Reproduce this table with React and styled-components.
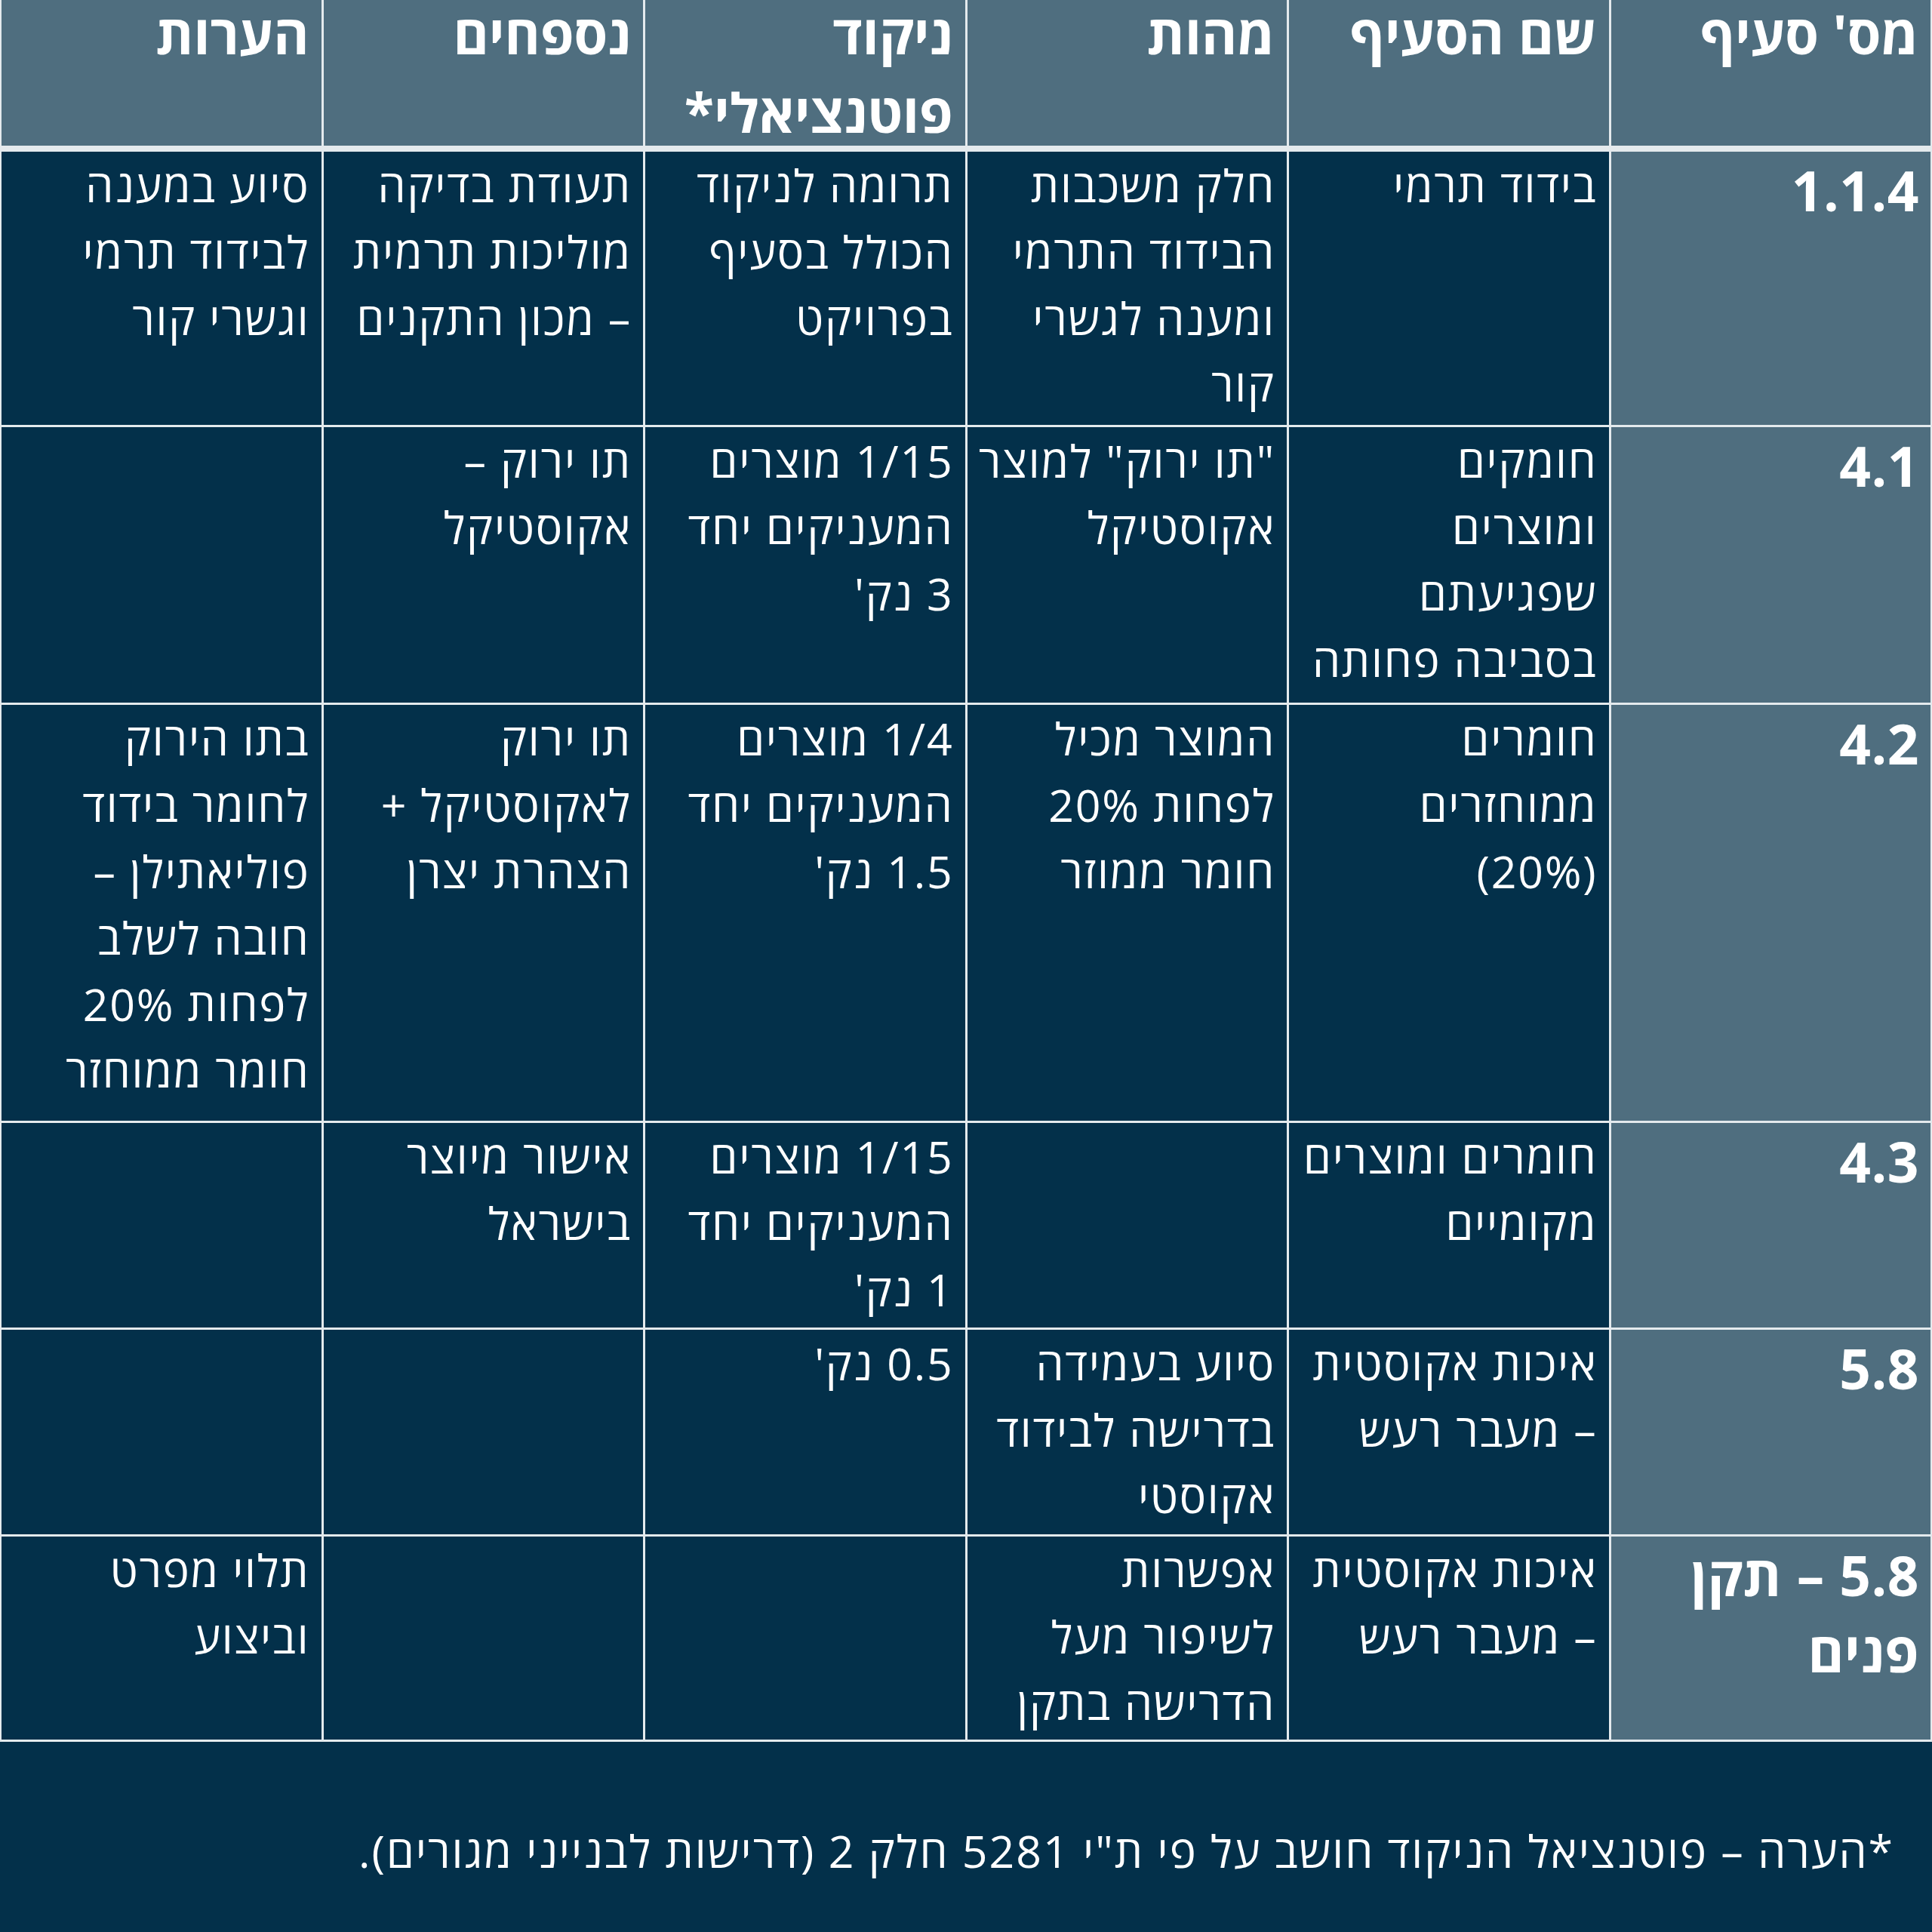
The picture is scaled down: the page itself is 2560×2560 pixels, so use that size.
import React from 'react'
import styled, { createGlobalStyle } from 'styled-components'

const SLATE = '#4f6e7f'
const NAVY = '#03304a'
const RULE = '#e4eaed'

const GlobalStyle = createGlobalStyle`
  html, body {
    margin: 0;
    padding: 0;
    background: ${NAVY};
  }
  body {
    font-family: 'Open Sans', 'DejaVu Sans', sans-serif;
  }
`

const Page = styled.div`
  width: 2560px;
  height: 2560px;
  background: ${NAVY};
  color: #fff;
  direction: rtl;
  display: flex;
  flex-direction: column;
`

const Table = styled.div`
  display: grid;
  grid-template-columns: repeat(6, 1fr);
  grid-template-rows: 198px 362px 365px 551px 271px 271px 269px;
  gap: 3px;
  padding: 0 2px 3px;
  background: ${RULE};
`

// header titles: tight line box, extra space between the two lines
const HeadCell = styled.div`
  background: ${SLATE};
  margin-bottom: 5px;
  padding: 0 16px;
  display: flex;
  flex-direction: column;
  gap: 16px;
  font-size: 72px;
  font-weight: 700;
  line-height: 88px;
`

const Cell = styled.div`
  background: ${NAVY};
  padding: 0 15px;
  font-size: 59px;
  font-weight: 400;
  letter-spacing: 1.8px;
  line-height: 88px;
`

const LabelCell = styled(Cell)`
  background: ${SLATE};
  font-size: 73px;
  font-weight: 700;
  letter-spacing: 0.5px;
  line-height: 101px;
`

const Line = styled.div`
  white-space: nowrap;
`

const Footnote = styled.div`
  flex: 1;
  padding: 100px 50px 0;
  font-size: 59px;
  letter-spacing: 2px;
  line-height: 88px;
  white-space: nowrap;
`

const headers = [
  ["מס' סעיף"],
  ['שם הסעיף'],
  ['מהות'],
  ['ניקוד', 'פוטנציאלי*'],
  ['נספחים'],
  ['הערות'],
]

const rows = [
  [
    ['1.1.4'],
    ['בידוד תרמי'],
    ['חלק משכבות', 'הבידוד התרמי', 'ומענה לגשרי', 'קור'],
    ['תרומה לניקוד', 'הכולל בסעיף', 'בפרויקט'],
    ['תעודת בדיקה', 'מוליכות תרמית', '– מכון התקנים'],
    ['סיוע במענה', 'לבידוד תרמי', 'וגשרי קור'],
  ],
  [
    ['4.1'],
    ['חומקים', 'ומוצרים', 'שפגיעתם', 'בסביבה פחותה'],
    ['"תו ירוק" למוצר', 'אקוסטיקל'],
    ['1/15 מוצרים', 'המעניקים יחד', "3 נק'"],
    ['תו ירוק –', 'אקוסטיקל'],
    [],
  ],
  [
    ['4.2'],
    ['חומרים', 'ממוחזרים', '(20%)'],
    ['המוצר מכיל', 'לפחות 20%', 'חומר ממוזר'],
    ['1/4 מוצרים', 'המעניקים יחד', "1.5 נק'"],
    ['תו ירוק', 'לאקוסטיקל +', 'הצהרת יצרן'],
    ['בתו הירוק', 'לחומר בידוד', 'פוליאתילן –', 'חובה לשלב', 'לפחות 20%', 'חומר ממוחזר'],
  ],
  [
    ['4.3'],
    ['חומרים ומוצרים', 'מקומיים'],
    [],
    ['1/15 מוצרים', 'המעניקים יחד', "1 נק'"],
    ['אישור מיוצר', 'בישראל'],
    [],
  ],
  [
    ['5.8'],
    ['איכות אקוסטית', '– מעבר רעש'],
    ['סיוע בעמידה', 'בדרישה לבידוד', 'אקוסטי'],
    ["0.5 נק'"],
    [],
    [],
  ],
  [
    ['5.8 – תקן', 'פנים'],
    ['איכות אקוסטית', '– מעבר רעש'],
    ['אפשרות', 'לשיפור מעל', 'הדרישה בתקן'],
    [],
    [],
    ['תלוי מפרט', 'וביצוע'],
  ],
]

const Lines = ({ lines }) => lines.map((text, i) => <Line key={i}>{text}</Line>)

export default function App() {
  return (
    <Page>
      <GlobalStyle />
      <Table>
        {headers.map((lines, i) => (
          <HeadCell key={`h${i}`}>
            <Lines lines={lines} />
          </HeadCell>
        ))}
        {rows.map((row, r) =>
          row.map((lines, c) =>
            c === 0 ? (
              <LabelCell key={`${r}-${c}`}>
                <Lines lines={lines} />
              </LabelCell>
            ) : (
              <Cell key={`${r}-${c}`}>
                <Lines lines={lines} />
              </Cell>
            )
          )
        )}
      </Table>
      <Footnote>
        *הערה – פוטנציאל הניקוד חושב על פי ת"י 5281 חלק 2 (דרישות לבנייני מגורים).
      </Footnote>
    </Page>
  )
}
